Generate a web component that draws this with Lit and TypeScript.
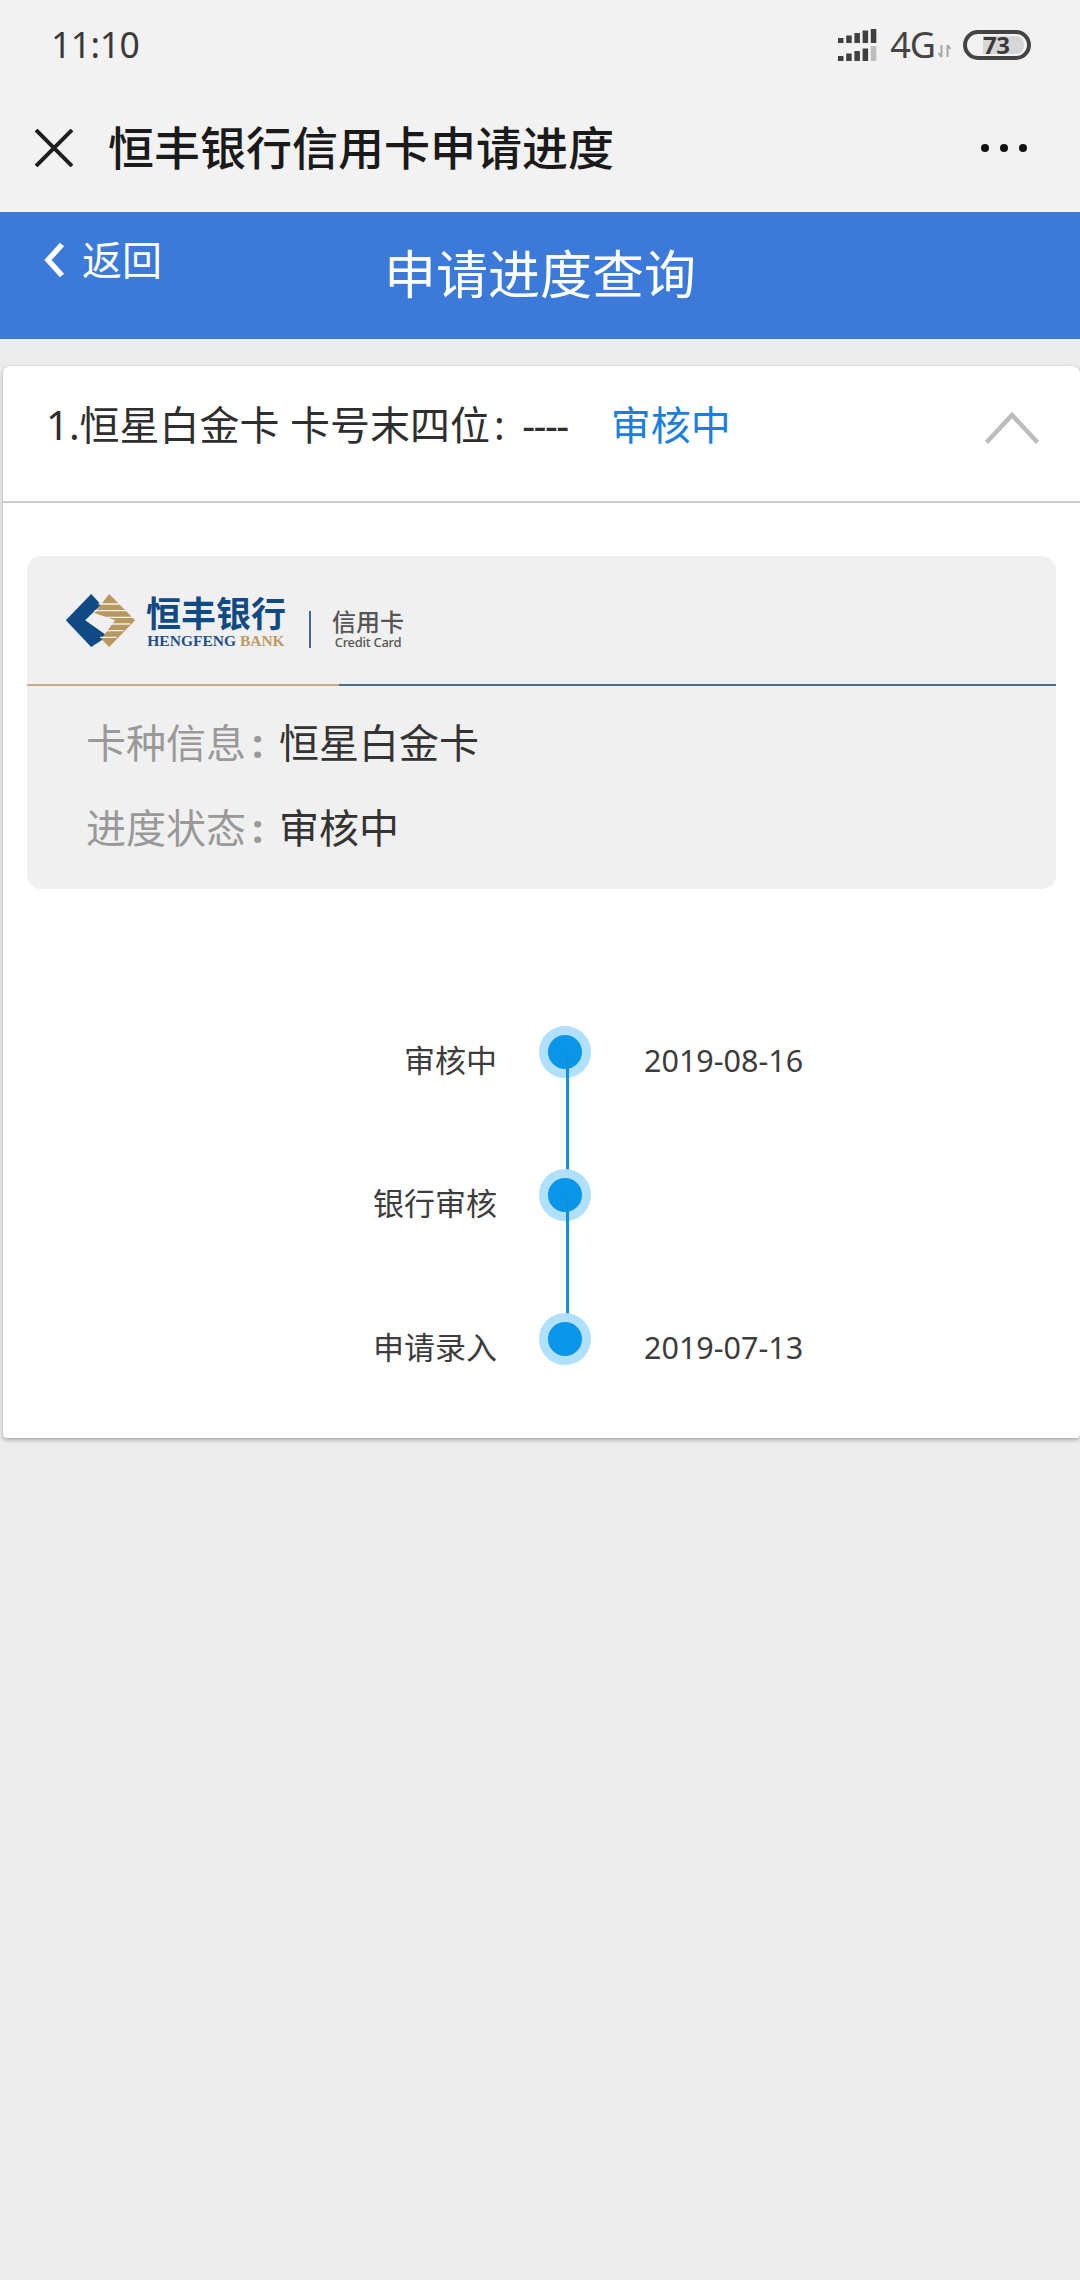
import { LitElement, html, css, svg } from "lit";
import { customElement } from "lit/decorators.js";

const FONT = css`"Noto Sans", "Noto Sans CJK SC", sans-serif`;

@customElement("app-root")
export class AppRoot extends LitElement {
  static styles = css`
    :host { display: block; min-height: 2280px; background: #ececec; font-family: ${FONT}; color: #333; }
    .top { background: #f2f2f2; height: 212px; display: flex; flex-direction: column; }
    .status { height: 90px; display: flex; align-items: center; padding: 0 49px 0 51px; }
    .time { font-size: 35.5px; color: #3a3a3a; line-height: 1; letter-spacing: -0.5px; }
    .sig { margin-left: auto; display: block; }
    .net { font-size: 36px; line-height: 1; color: #444; margin-left: 12px; letter-spacing: -1px; }
    .arrows { display: block; margin: 12px 0 0 3px; }
    .batt { margin-left: 12px; width: 68px; height: 30px; box-sizing: border-box; border: 4px solid #444; border-radius: 15px; display: flex; align-items: center; justify-content: flex-end; padding-right: 3px; }
    .level { width: 41px; height: 18px; background: #d6d6d6; border-radius: 0 8px 8px 0; font-size: 24px; font-weight: 700; color: #3a3a3a; line-height: 18px; letter-spacing: -0.5px; }
    .nav { flex: 1; display: flex; align-items: center; padding: 0 53px 6px 35px; }
    .close { display: block; }
    .nav-title { font-size: 46px; font-weight: 500; color: #1a1a1a; margin-left: 35px; line-height: 1; margin-top: -2px; }
    .dots { margin-left: auto; display: block; }
    .blue { height: 127px; background: #3b7ad9; color: #fff; display: grid; grid-template-columns: 1fr auto 1fr; }
    .back { display: flex; align-items: center; padding: 0 0 0 43px; height: 96px; font-size: 40px; gap: 17px; line-height: 1; }
    .page-title { font-size: 52px; line-height: 1; align-self: center; margin-top: -3px; }
    .card { margin: 27px 0 0 3px; background: #fff; border-radius: 8px 8px 4px 4px; box-shadow: 0 2px 4px rgba(0,0,0,.28), 0 0 3px rgba(0,0,0,.06); padding-bottom: 27.5px; }
    .head { border-bottom: 2px solid #ccc; display: flex; align-items: center; padding: 0 41px 17px 43px; box-sizing: border-box; height: 137px; font-size: 40px; line-height: 1; }
    .head .sum { color: #2e2e2e; white-space: pre; }
    .head .colon { margin: 0 7px 0 4px; }
    .head .dash { letter-spacing: -1.5px; }
    .head .st { color: #1a7fe0; margin-left: 43px; }
    .chev { margin-left: auto; display: block; margin-top: 6px; }
    .inner { margin: 53px 24px 0 24px; background: #f0f0f0; border-radius: 14px; height: 333px; display: flex; flex-direction: column; }
    .brand { height: 128px; display: flex; align-items: center; padding-left: 38px; flex: none; }
    .brand-name { margin-left: 10px; display: flex; flex-direction: column; align-items: center; margin-top: 2px; }
    .cn { font-size: 35px; font-weight: 700; color: #0f4a85; line-height: 38px; }
    .en { font-family: "Liberation Serif", serif; font-weight: 700; font-size: 15.5px; line-height: 15px; color: #1f4f86; white-space: nowrap; }
    .en span { color: #bd9a63; }
    .vbar { width: 2px; height: 37px; background: #3d6a96; margin: 18px 21px 0 23px; }
    .sub { display: flex; flex-direction: column; align-items: center; margin-top: 18px; }
    .sub-cn { font-size: 24px; line-height: 26px; color: #555; font-weight: 500; }
    .sub-en { font-size: 13px; line-height: 14px; color: #555; font-weight: 500; letter-spacing: -0.3px; white-space: nowrap; }
    .rule { display: flex; height: 2px; flex: none; }
    .rule .a { width: 312px; background: #c9ac85; }
    .rule .b { flex: 1; background: #4a6d8a; }
    .info { padding: 14px 0 0 59px; display: flex; flex-direction: column; }
    .row { height: 85px; display: flex; align-items: center; font-size: 40px; line-height: 1; }
    .row .k { color: #999; width: 193px; }
    .row .k i { font-style: normal; font-weight: 700; margin-left: 6px; }
    .row .v { color: #333; }
    .tl { margin-top: 91px; display: flex; flex-direction: column; }
    .step { height: 143.5px; display: grid; grid-template-columns: 494px 52px 1fr; column-gap: 42px; align-items: center; font-size: 31px; line-height: 1; color: #3c3c3c; }
    .step > .lb { text-align: right; padding-top: 17px; }
    .step > .dt { padding: 17px 0 0 11px; font-size: 30.5px; }
    .dot { position: relative; width: 34px; height: 34px; border-radius: 50%; background: #0a96e8; border: 9px solid #b0e0fb; }
    .dot.line::after { content: ""; position: absolute; left: 18px; top: 17px; width: 3px; height: 125px; background: #0f8fdc; }
  `;

  render() {
    return html`
      <div class="top">
        <div class="status">
          <span class="time">11:10</span>
          <svg class="sig" width="40" height="32" viewBox="0 0 40 32">
            ${[0, 1].map((r) =>
              [0, 1, 2, 3, 4].map((i) => {
                const h = 5 + i * 2.5;
                const base = r === 0 ? 14 : 32;
                const fill = r === 1 && i === 4 ? "#bdbdbd" : "#3f3f3f";
                return svg`<rect x=${i * 8.2} y=${base - h} width="5.5" height=${h} fill=${fill}></rect>`;
              })
            )}
          </svg>
          <span class="net">4G</span>
          <svg class="arrows" width="13" height="13" viewBox="0 0 13 13">
            <path d="M3.5 0v12M0.5 8l3 4M9.5 12V0M12.5 4l-3-4" stroke="#a8a8a8" stroke-width="2" fill="none"></path>
          </svg>
          <div class="batt"><div class="level">73</div></div>
        </div>
        <div class="nav">
          <svg class="close" width="38" height="38" viewBox="0 0 38 38">
            <path d="M1 1L37 37M37 1L1 37" stroke="#1f1f1f" stroke-width="4" fill="none"></path>
          </svg>
          <span class="nav-title">恒丰银行信用卡申请进度</span>
          <svg class="dots" width="46" height="8" viewBox="0 0 46 8">
            <circle cx="4" cy="4" r="4" fill="#111"></circle>
            <circle cx="23" cy="4" r="4" fill="#111"></circle>
            <circle cx="42" cy="4" r="4" fill="#111"></circle>
          </svg>
        </div>
      </div>
      <div class="blue">
        <div class="back">
          <svg width="22" height="36" viewBox="0 0 22 36">
            <path d="M19 2.5L5 18L19 33.5" stroke="#fff" stroke-width="5.5" fill="none"></path>
          </svg>
          <span>返回</span>
        </div>
        <div class="page-title">申请进度查询</div>
        <div></div>
      </div>
      <div class="card">
        <div class="head">
          <span class="sum">1.恒星白金卡 卡号末四位<span class="colon">:</span> <span class="dash">----</span></span>
          <span class="st">审核中</span>
          <svg class="chev" width="54" height="32" viewBox="0 0 54 32">
            <path d="M1.5 30.5L27 3L52.5 30.5" stroke="#bcbcbc" stroke-width="4.5" fill="none"></path>
          </svg>
        </div>
        <div class="inner">
          <div class="brand">
            <svg width="71" height="55" viewBox="190 730 212 165">
              <polygon points="192,812 268,733 298,765 250,812 318,860 268,892" fill="#0f4a85"></polygon>
              <polygon points="322,733 400,812 322,892 298,868 340,812 278,790" fill="#b8985f"></polygon>
              <path d="M290 763H355M278 783H375M295 803H395M310 823H385M305 843H365M295 863H345" stroke="#f0f0f0" stroke-width="4" fill="none"></path>
            </svg>
            <div class="brand-name">
              <div class="cn">恒丰银行</div>
              <div class="en">HENGFENG <span>BANK</span></div>
            </div>
            <div class="vbar"></div>
            <div class="sub">
              <div class="sub-cn">信用卡</div>
              <div class="sub-en">Credit Card</div>
            </div>
          </div>
          <div class="rule"><div class="a"></div><div class="b"></div></div>
          <div class="info">
            <div class="row"><span class="k">卡种信息<i>:</i></span><span class="v">恒星白金卡</span></div>
            <div class="row"><span class="k">进度状态<i>:</i></span><span class="v">审核中</span></div>
          </div>
        </div>
        <div class="tl">
          ${[
            ["审核中", "2019-08-16"],
            ["银行审核", ""],
            ["申请录入", "2019-07-13"],
          ].map(
            ([l, d], i) => html`
              <div class="step">
                <div class="lb">${l}</div>
                <div class="dot ${i < 2 ? "line" : ""}"></div>
                <div class="dt">${d}</div>
              </div>
            `
          )}
        </div>
      </div>
    `;
  }
}
